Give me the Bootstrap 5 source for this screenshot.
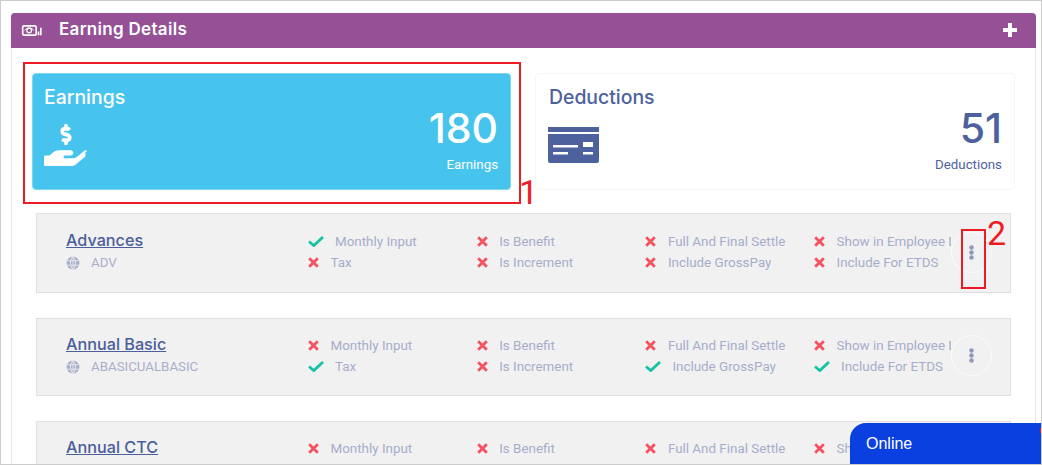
<!DOCTYPE html>
<html lang="en">
<head>
<meta charset="utf-8">
<title>Earning Details</title>
<link href="https://cdn.jsdelivr.net/npm/bootstrap@5.3.0/dist/css/bootstrap.min.css" rel="stylesheet">
<style>
html,body{margin:0;background:#fff;}
body{font-family:Roboto,sans-serif;}
.frame{position:relative;height:465px;width:1042px;border:1px solid #ccc;overflow:hidden;padding:12px 5px 0 10px;background:#fff;}
.panel{border:1px solid #e6e6e6;border-top:0;border-radius:4px 4px 0 0;min-height:460px;background:#fff;}
.panel-head{height:35px;background:#955096;border-radius:4px 4px 0 0;color:#fff;padding:0 19px 0 10px;margin:0 -1px;}
.panel-head h2{font:600 17px/1 Inter,sans-serif;margin:0 0 3px 16px;letter-spacing:.3px;}
.panel-plus{margin-bottom:2px;}
.panel-main{padding:25px 21px 0 20px;}
.stat{height:117px;border-radius:4px;padding:11px 12px 0 13px;border:1px solid #f6f6f6;background:#fff;color:#4d619f;margin-right:-1px;}
.stat-on{background:#47c4ee;border-color:#7fd6f3;color:#fff;padding-left:11px;margin-right:0;}
.stat h3{font:500 19.400px/24px Inter,sans-serif;margin:0;}
.stat-ico{margin-top:15px;display:block;}
.stat-card-ico{margin:18px 0 0 -1px;display:block;}
.stat-num{font:500 41px/50px Inter,sans-serif;margin-top:18px;}
.stat-lbl{font-size:13.300px;line-height:20px;margin-top:2px;}
.erow{margin:23px 3px 25px 4px;background:#f1f1f1;border:1px solid #dfdfdf;padding:16px 0 18px 29px;}
.erow.first{padding:17px 0 19px 29px;}
.ename{width:242px;flex:none;}
.ename a{font:500 16.200px/18px Inter,sans-serif;color:#4b5e9b;display:block;width:max-content;}
.ecode{font-size:13.300px;line-height:20px;margin-top:4px;color:#a9afc9;}
.ecode svg{margin-right:11px;}
.eflags{display:grid;grid-template-columns:168.7px 168.7px 168.7px 137.4px;grid-auto-rows:21px;flex:none;}
.eflag{font-size:13.400px;line-height:21px;color:#a6adcb;white-space:nowrap;}
.eflag span{display:block;max-width:117px;overflow:hidden;}
.mk-x{margin-right:11.500px;flex:none;}
.mk-c{margin-right:11px;flex:none;}
.ekebab{width:41px;height:41px;border:1px solid #fbfbfb;border-radius:50%;flex:none;}
.erow.first .ekebab{margin-top:1px;}
.mark-box{position:absolute;border:2px solid #ed1c24;pointer-events:none;}
.box-a{left:22px;top:61px;width:498px;height:142px;}
.box-b{left:960px;top:228px;width:25px;height:60px;}
.mark-num{position:absolute;color:#ed1c24;font:400 34px/1 Roboto,sans-serif;}
.num-a{left:518px;top:174px;}
.num-b{left:986px;top:215px;}
.chat{position:absolute;left:849px;bottom:0;width:191px;height:41px;background:#0a3fe0;color:#fff;border-top-left-radius:16px;font:16px/41px "Liberation Sans",sans-serif;padding-left:16px;}
.chat-dot{position:absolute;right:0;top:5px;width:1px;height:5px;background:#e0202a;}
</style>
</head>
<body>
<svg width="0" height="0" class="d-none">
<defs>
<symbol id="i-x" viewBox="0 0 11 11"><path d="M1.2 1.2 9.8 9.8M9.8 1.2 1.2 9.8" fill="none" stroke="#f5515f" stroke-width="2.8"/></symbol>
<symbol id="i-c" viewBox="0 0 16 11"><path d="M1 5.5 5.8 9.6 15 1" fill="none" stroke="#17c3a2" stroke-width="2.8"/></symbol>
<symbol id="i-g" viewBox="0 0 14 14"><circle cx="7" cy="7" r="6.5" fill="#a9afc9"/><path d="M.5 4.8h13M.5 9.2h13M7 .5v13M7 .5C3.5 4 3.5 10 7 13.5M7 .5c3.5 3.5 3.5 9.5 0 13" fill="none" stroke="#f1f1f1" stroke-width=".8"/></symbol>
<symbol id="i-k" viewBox="0 0 6 18"><circle cx="3" cy="3" r="2.7" fill="#8f96ba"/><circle cx="3" cy="9" r="2.7" fill="#8f96ba"/><circle cx="3" cy="15" r="2.7" fill="#8f96ba"/></symbol>
</defs>
</svg>
<div class="frame">
  <div class="panel">
    <div class="panel-head d-flex align-items-center">
      <svg width="22" height="13" viewBox="0 0 22 14" fill="none" stroke="#fff"><rect x="1" y="2" width="14.500" height="10" rx="1.500" stroke-width="1.800"/><circle cx="8" cy="7" r="2.500" stroke-width="1.400"/><path d="M3 7c2-3.500 8-3.500 10 0" stroke-width="1"/><path d="M18 12V8M20.500 12V4" stroke-width="1.800"/></svg>
      <h2>Earning Details</h2>
      <svg class="ms-auto panel-plus" width="14" height="14" viewBox="0 0 14 14"><path d="M7 0v14M0 7h14" stroke="#fff" stroke-width="4"/></svg>
    </div>
    <div class="panel-main">
      <div class="row gx-4">
        <div class="col-6">
          <div class="stat stat-on d-flex justify-content-between">
            <div>
              <h3>Earnings</h3>
              <svg class="stat-ico" width="44" height="42" viewBox="0 0 576 512" preserveAspectRatio="none" fill="#fff"><path d="M257.6 144.3l50 14.3c3.6 1 6.1 4.4 6.1 8.1 0 4.600-3.800 8.400-8.400 8.400h-32.800c-3.600 0-7.100-.8-10.300-2.200-4.800-2.200-10.400-1.700-14.100 2l-17.500 17.500c-5.300 5.300-4.700 14.300 1.500 18.400 9.500 6.300 20.300 10.100 31.800 11.500V240c0 8.800 7.200 16 16 16h16c8.800 0 16-7.200 16-16v-17.600c30.300-3.600 53.300-31 49.300-63-2.900-23-20.700-41.300-42.900-47.700l-50-14.300c-3.600-1-6.100-4.400-6.100-8.100 0-4.600 3.800-8.400 8.400-8.400h32.800c3.600 0 7.100.8 10.300 2.200 4.800 2.200 10.400 1.700 14.100-2l17.500-17.500c5.300-5.300 4.700-14.300-1.500-18.400-9.500-6.300-20.300-10.100-31.800-11.500V16c0-8.800-7.200-16-16-16h-16c-8.800 0-16 7.200-16 16v17.600c-30.300 3.600-53.300 31-49.300 63 2.900 23 20.700 41.300 42.900 47.700z"/><path d="M565.300 328.100c-11.800-10.700-30.200-10-42.600 0L430.300 402c-11.300 9.100-25.400 14-40 14H272c-8.800 0-16-7.200-16-16s7.200-16 16-16h78.300c15.900 0 30.700-10.900 33.300-26.600 3.300-20-12.100-37.400-31.600-37.400H192c-27 0-53.100 9.300-74.100 26.300L71.400 384H16c-8.800 0-16 7.200-16 16v96c0 8.800 7.200 16 16 16h356.800c14.500 0 28.600-4.900 40-14l120.900-96.800c15.200-12.100 16.400-35 1.700-48.100z"/></svg>
            </div>
            <div class="text-end">
              <div class="stat-num">180</div>
              <div class="stat-lbl">Earnings</div>
            </div>
          </div>
        </div>
        <div class="col-6">
          <div class="stat d-flex justify-content-between">
            <div>
              <h3>Deductions</h3>
              <svg class="stat-card-ico" width="52" height="37" viewBox="0 0 52 37"><path d="M0 0h51v5H0zM0 7h51v27a2 2 0 0 1-2 2H2a2 2 0 0 1-2-2z" fill="#4d619f"/><path d="M5 18h25v2.500H5zM5 25h15v2.500H5zM35 15h10v5H35zM35 25h10v2.500H35z" fill="#fff"/></svg>
            </div>
            <div class="text-end">
              <div class="stat-num">51</div>
              <div class="stat-lbl">Deductions</div>
            </div>
          </div>
        </div>
      </div>

      <div class="erow first d-flex">
        <div class="ename"><a href="#">Advances</a><div class="ecode d-flex align-items-center"><svg width="14" height="14"><use href="#i-g"/></svg>ADV</div></div>
        <div class="eflags">
          <div class="eflag d-flex align-items-center"><svg class="mk-c" width="16" height="11"><use href="#i-c"/></svg><span>Monthly Input</span></div>
          <div class="eflag d-flex align-items-center"><svg class="mk-x" width="11" height="11"><use href="#i-x"/></svg><span>Is Benefit</span></div>
          <div class="eflag d-flex align-items-center"><svg class="mk-x" width="11" height="11"><use href="#i-x"/></svg><span>Full And Final Settlement</span></div>
          <div class="eflag d-flex align-items-center"><svg class="mk-x" width="11" height="11"><use href="#i-x"/></svg><span>Show in Employee Dashboard</span></div>
          <div class="eflag d-flex align-items-center"><svg class="mk-x" width="11" height="11"><use href="#i-x"/></svg><span>Tax</span></div>
          <div class="eflag d-flex align-items-center"><svg class="mk-x" width="11" height="11"><use href="#i-x"/></svg><span>Is Increment</span></div>
          <div class="eflag d-flex align-items-center"><svg class="mk-x" width="11" height="11"><use href="#i-x"/></svg><span>Include GrossPay</span></div>
          <div class="eflag d-flex align-items-center"><svg class="mk-x" width="11" height="11"><use href="#i-x"/></svg><span>Include For ETDS</span></div>
        </div>
        <div class="ekebab d-flex align-items-center justify-content-center"><svg width="5" height="15"><use href="#i-k"/></svg></div>
      </div>

      <div class="erow d-flex">
        <div class="ename"><a href="#">Annual Basic</a><div class="ecode d-flex align-items-center"><svg width="14" height="14"><use href="#i-g"/></svg>ABASICUALBASIC</div></div>
        <div class="eflags">
          <div class="eflag d-flex align-items-center"><svg class="mk-x" width="11" height="11"><use href="#i-x"/></svg><span>Monthly Input</span></div>
          <div class="eflag d-flex align-items-center"><svg class="mk-x" width="11" height="11"><use href="#i-x"/></svg><span>Is Benefit</span></div>
          <div class="eflag d-flex align-items-center"><svg class="mk-x" width="11" height="11"><use href="#i-x"/></svg><span>Full And Final Settlement</span></div>
          <div class="eflag d-flex align-items-center"><svg class="mk-x" width="11" height="11"><use href="#i-x"/></svg><span>Show in Employee Dashboard</span></div>
          <div class="eflag d-flex align-items-center"><svg class="mk-c" width="16" height="11"><use href="#i-c"/></svg><span>Tax</span></div>
          <div class="eflag d-flex align-items-center"><svg class="mk-x" width="11" height="11"><use href="#i-x"/></svg><span>Is Increment</span></div>
          <div class="eflag d-flex align-items-center"><svg class="mk-c" width="16" height="11"><use href="#i-c"/></svg><span>Include GrossPay</span></div>
          <div class="eflag d-flex align-items-center"><svg class="mk-c" width="16" height="11"><use href="#i-c"/></svg><span>Include For ETDS</span></div>
        </div>
        <div class="ekebab d-flex align-items-center justify-content-center"><svg width="5" height="15"><use href="#i-k"/></svg></div>
      </div>

      <div class="erow d-flex">
        <div class="ename"><a href="#">Annual CTC</a></div>
        <div class="eflags">
          <div class="eflag d-flex align-items-center"><svg class="mk-x" width="11" height="11"><use href="#i-x"/></svg><span>Monthly Input</span></div>
          <div class="eflag d-flex align-items-center"><svg class="mk-x" width="11" height="11"><use href="#i-x"/></svg><span>Is Benefit</span></div>
          <div class="eflag d-flex align-items-center"><svg class="mk-x" width="11" height="11"><use href="#i-x"/></svg><span>Full And Final Settlement</span></div>
          <div class="eflag d-flex align-items-center"><svg class="mk-x" width="11" height="11"><use href="#i-x"/></svg><span>Show in Employee Dashboard</span></div>
        </div>
      </div>
    </div>
  </div>

  <div class="mark-box box-a"></div>
  <div class="mark-box box-b"></div>
  <div class="mark-num num-a">1</div>
  <div class="mark-num num-b">2</div>
  <div class="chat">Online<div class="chat-dot"></div></div>
</div>
<script src="https://cdn.jsdelivr.net/npm/bootstrap@5.3.0/dist/js/bootstrap.bundle.min.js"></script>
</body>
</html>
